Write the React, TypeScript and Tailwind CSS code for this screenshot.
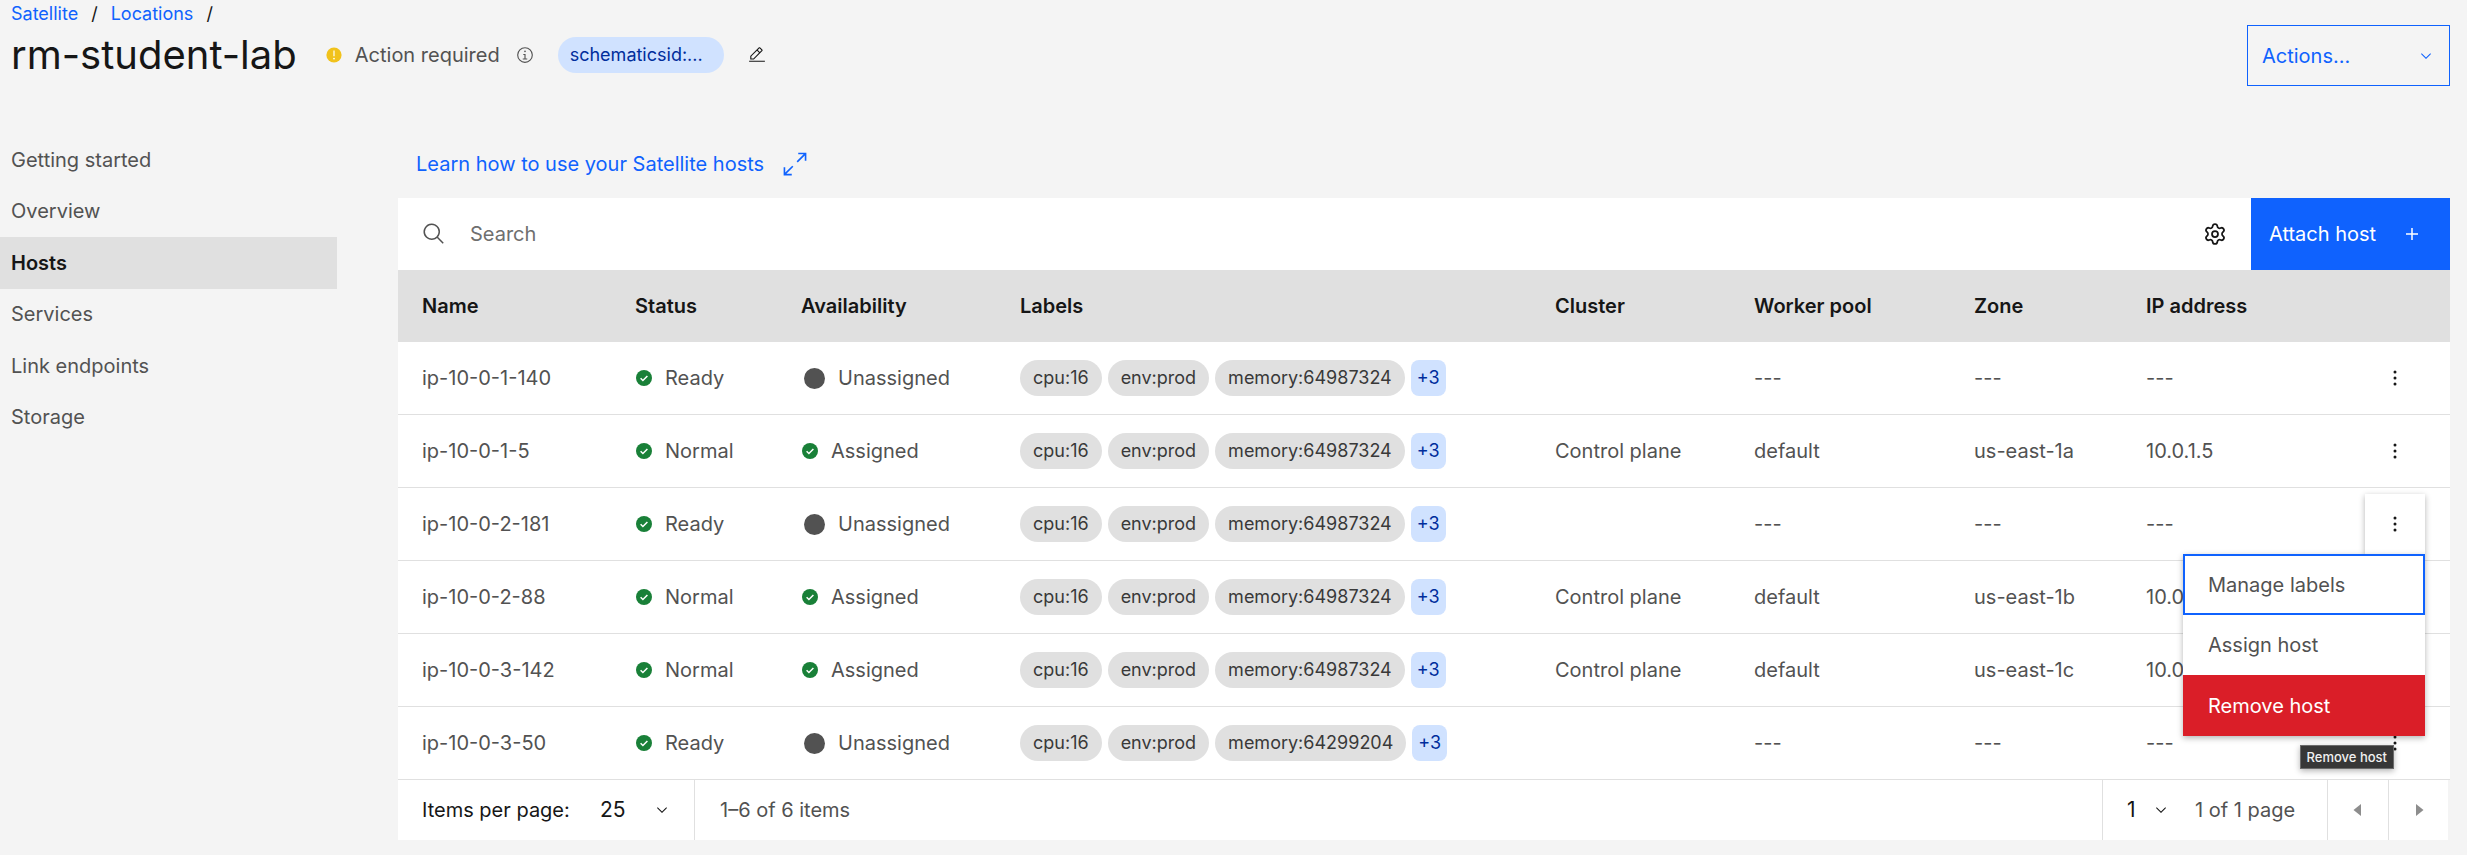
import type { ReactNode } from "react";
import { Settings } from "lucide-react";

type Host = {
  name: string;
  status: "Ready" | "Normal";
  memory: string;
  cluster?: string;
  pool?: string;
  zone?: string;
  ip?: string;
  open?: boolean;
};

const hosts: Host[] = [
  { name: "ip-10-0-1-140", status: "Ready", memory: "64987324" },
  { name: "ip-10-0-1-5", status: "Normal", memory: "64987324", cluster: "Control plane", pool: "default", zone: "us-east-1a", ip: "10.0.1.5" },
  { name: "ip-10-0-2-181", status: "Ready", memory: "64987324", open: true },
  { name: "ip-10-0-2-88", status: "Normal", memory: "64987324", cluster: "Control plane", pool: "default", zone: "us-east-1b", ip: "10.0.2.88" },
  { name: "ip-10-0-3-142", status: "Normal", memory: "64987324", cluster: "Control plane", pool: "default", zone: "us-east-1c", ip: "10.0.3.142" },
  { name: "ip-10-0-3-50", status: "Ready", memory: "64299204" },
];

const navItems = ["Getting started", "Overview", "Hosts", "Services", "Link endpoints", "Storage"];

function Icon({ size = 32, className, children }: { size?: number; className: string; children: ReactNode }) {
  return (
    <svg viewBox={`0 0 ${size} ${size}`} fill="currentColor" aria-hidden="true" className={`shrink-0 ${className}`}>
      {children}
    </svg>
  );
}

function Chevron({ className }: { className: string }) {
  return (
    <Icon size={16} className={className}>
      <path d="M8 11L3 6 3.7 5.3 8 9.6 12.3 5.3 13 6z" />
    </Icon>
  );
}

function Check() {
  return (
    <Icon size={16} className="size-4 text-[#198038]">
      <circle cx="8" cy="8" r="8" />
      <path d="M4.6 8.3L6.9 10.5 11.4 5.9" fill="none" stroke="#fff" strokeWidth="1.5" />
    </Icon>
  );
}

function Tag({ children }: { children: ReactNode }) {
  return (
    <span className="flex h-9 items-center rounded-full bg-[#e0e0e0] px-[13px] text-[18px] text-[#393939]">{children}</span>
  );
}

function RowMenu() {
  return (
    <div role="menu" className="absolute top-full right-0 z-10 flex w-[242px] flex-col bg-white shadow-[0_2px_6px_rgba(0,0,0,0.3)]">
      <button role="menuitem" className="h-[61px] border-2 border-[#0f62fe] pl-[23px] text-left">Manage labels</button>
      <button role="menuitem" className="h-[60px] pl-[25px] text-left">Assign host</button>
      <button role="menuitem" className="h-[61px] bg-[#da1e28] pl-[25px] text-left text-white">Remove host</button>
      <span
        role="tooltip"
        className="absolute top-full right-[31px] mt-[9px] flex h-6 items-center border border-[#6b6b6b] bg-[#373737] px-1.5 text-[13px] font-medium whitespace-nowrap text-[#f0f0f0] shadow-[0_2px_6px_rgba(0,0,0,0.3)]"
      >
        Remove host
      </span>
    </div>
  );
}

function HostRow({ host }: { host: Host }) {
  const assigned = host.status === "Normal";
  return (
    <tr className="*:h-[73px] *:border-b *:border-[#e0e0e0] *:p-0">
      <td className="pl-6!">{host.name}</td>
      <td className="pl-6!">
        <div className="flex items-center gap-[13px] pl-px">
          <Check />
          {host.status}
        </div>
      </td>
      <td className="pl-6!">
        <div className="flex items-center gap-[13px] pl-px">
          {assigned ? <Check /> : <span className="ml-0.5 size-[21px] rounded-full bg-[#525252]" />}
          {assigned ? "Assigned" : "Unassigned"}
        </div>
      </td>
      <td className="pl-6!">
        <div className="flex items-center gap-1.5">
          <Tag>cpu:16</Tag>
          <Tag>env:prod</Tag>
          <Tag>memory:{host.memory}</Tag>
          <button className="h-9 rounded-lg bg-[#d0e2ff] px-1.5 text-[18px] text-[#002d9c]">+3</button>
        </div>
      </td>
      <td className="pl-6!">{host.cluster}</td>
      <td className="pl-6!">{host.pool ?? "---"}</td>
      <td className="pl-6!">{host.zone ?? "---"}</td>
      <td className="pl-6!">{host.ip ?? "---"}</td>
      <td className="pr-[25px]!">
        <div className="relative ml-auto size-[60px]">
          <button
            aria-label={`Options for ${host.name}`}
            className={`flex size-full items-center justify-center text-[#161616] ${host.open ? "bg-white shadow-[0_2px_6px_rgba(0,0,0,0.3)]" : ""}`}
          >
            <Icon className="size-6">
              <circle cx="16" cy="8" r="2" />
              <circle cx="16" cy="16" r="2" />
              <circle cx="16" cy="24" r="2" />
            </Icon>
          </button>
          {host.open && <RowMenu />}
        </div>
      </td>
    </tr>
  );
}

function Pagination() {
  return (
    <footer className="mr-0.5 flex h-[60px] items-stretch bg-white">
      <div className="flex items-center pl-6">
        <label htmlFor="page-size" className="w-[156px] whitespace-nowrap text-[#161616]">Items per page:</label>
        <div className="relative flex h-full items-center border-r border-[#e0e0e0]">
          <select id="page-size" defaultValue="25" className="h-full w-[116px] appearance-none pl-[22px] text-[21px] text-[#161616]">
            <option>25</option>
          </select>
          <Chevron className="pointer-events-none absolute right-6 size-4 text-[#161616]" />
        </div>
      </div>
      <p className="flex items-center pl-[25px]">1–6 of 6 items</p>
      <div className="ml-auto flex items-stretch border-l border-[#e0e0e0]">
        <div className="relative flex items-center">
          <select aria-label="Page number" defaultValue="1" className="h-full w-[92px] appearance-none pl-6 text-[21px] text-[#161616]">
            <option>1</option>
          </select>
          <Chevron className="pointer-events-none absolute right-[26px] size-4 text-[#161616]" />
        </div>
        <span className="flex w-[132px] items-center">1 of 1 page</span>
        <button aria-label="Previous page" className="flex w-[61px] items-center justify-center border-l border-[#e0e0e0] text-[#8d8d8d]">
          <Icon className="size-6">
            <path d="M20 24L10 16 20 8z" />
          </Icon>
        </button>
        <button aria-label="Next page" className="flex w-[60px] items-center justify-center border-l border-[#e0e0e0] text-[#8d8d8d]">
          <Icon className="size-6">
            <path d="M12 8L22 16 12 24z" />
          </Icon>
        </button>
      </div>
    </footer>
  );
}

export default function App() {
  return (
    <div className="min-h-screen bg-[#f4f4f4] pb-[15px] font-['Inter',sans-serif] text-[20px] leading-6 text-[#525252]">
      <header className="flex h-[134px] items-start justify-between pr-[17px] pl-[11px]">
        <div>
          <nav aria-label="Breadcrumb" className="flex h-[27px] items-center gap-[13px] text-[18px] text-[#161616]">
            <a href="#satellite" className="text-[#0f62fe]">Satellite</a>
            <span>/</span>
            <a href="#locations" className="text-[#0f62fe]">Locations</a>
            <span>/</span>
          </nav>
          <div className="flex h-14 items-center">
            <h1 className="text-[40px] leading-[48px] text-[#161616]">rm-student-lab</h1>
            <Icon size={16} className="ml-[29px] size-4 text-[#f1c21b]">
              <circle cx="8" cy="8" r="7.6" />
              <path d="M7.4 3.6h1.2v5.6H7.4z" fill="#fff" />
              <circle cx="8" cy="11.6" r="0.9" fill="#fff" />
            </Icon>
            <span className="ml-[13px]">Action required</span>
            <button aria-label="Status details" className="ml-4">
              <Icon className="size-[18px]">
                <path d="M17 22L17 14 13 14 13 16 15 16 15 22 12 22 12 24 20 24 20 22 17 22z M16 8a1.5 1.5 0 1 0 1.5 1.5A1.5 1.5 0 0 0 16 8z" />
                <path d="M16,30A14,14,0,1,1,30,16,14,14,0,0,1,16,30ZM16,4A12,12,0,1,0,28,16,12,12,0,0,0,16,4Z" />
              </Icon>
            </button>
            <span className="ml-6 flex h-9 w-[166px] items-center rounded-full bg-[#d0e2ff] pl-3 text-[18px] text-[#002d9c]">schematicsid:...</span>
            <button aria-label="Edit tags" className="ml-6 text-[#161616]">
              <Icon className="size-[18px]">
                <path d="M2 26H30V28H2z M25.4,9c0.8-0.8,0.8-2,0-2.8l-3.6-3.6c-0.8-0.8-2-0.8-2.8,0l-15,15V24h6.4L25.4,9z M20.4,4L24,7.6l-3,3L17.4,7L20.4,4z M6,22v-3.6l10-10l3.6,3.6l-10,10H6z" />
              </Icon>
            </button>
          </div>
        </div>
        <button className="mt-[25px] flex h-[61px] w-[203px] items-center justify-between border border-[#0f62fe] pr-[15px] pl-3.5 text-[#0f62fe]">
          Actions...
          <Chevron className="size-4" />
        </button>
      </header>

      <div className="flex items-start gap-[61px] pr-[17px]">
        <nav aria-label="Location" className="grid h-[309px] w-[337px] shrink-0 grid-rows-6">
          {navItems.map((item) => (
            <a
              key={item}
              href={`#${item}`}
              className={`flex items-center pl-[11px] ${item === "Hosts" ? "bg-[#e0e0e0] font-semibold text-[#161616]" : ""}`}
            >
              {item}
            </a>
          ))}
        </nav>

        <main className="min-w-0 grow">
          <div className="flex h-16 items-center pb-1 pl-[18px]">
            <a href="#learn" className="flex items-center gap-[18px] text-[#0f62fe]">
              Learn how to use your Satellite hosts
              <Icon className="size-[26px]">
                <path d="M20 2 20 4 26.586 4 18 12.582 19.414 14 28 5.414 28 12 30 12 30 2 20 2z" />
                <path d="M14 19.416 12.592 18 4 26.586 4 20 2 20 2 30 12 30 12 28 5.414 28 14 19.416z" />
              </Icon>
            </a>
          </div>

          <div className="flex h-[72px] items-stretch bg-white">
            <label htmlFor="host-search" aria-label="Search" className="flex items-center pr-6 pl-6">
              <Icon className="size-6">
                <path d="M29,27.5859l-7.5521-7.5521a11.0177,11.0177,0,1,0-1.4141,1.4141L27.5859,29ZM4,13a9,9,0,1,1,9,9A9.01,9.01,0,0,1,4,13Z" />
              </Icon>
            </label>
            <input id="host-search" type="search" placeholder="Search" className="grow placeholder:text-[#6f6f6f]" />
            <button aria-label="Settings" className="flex w-[72px] items-center justify-center text-[#161616]">
              <Settings className="size-6" strokeWidth={1.75} aria-hidden="true" />
            </button>
            <button className="flex w-[199px] items-center justify-between bg-[#0f62fe] pr-[26px] pl-[18px] text-white">
              Attach host
              <Icon className="size-6">
                <path d="M17 15L17 8 15 8 15 15 8 15 8 17 15 17 15 24 17 24 17 17 24 17 24 15z" />
              </Icon>
            </button>
          </div>

          <table className="w-full table-fixed border-separate border-spacing-0 bg-white text-left whitespace-nowrap">
            <thead>
              <tr className="bg-[#e0e0e0] text-[#161616] *:h-[72px] *:py-0 *:pl-6 *:font-semibold">
                <th className="w-[213px]">Name</th>
                <th className="w-[166px]">Status</th>
                <th className="w-[219px]">Availability</th>
                <th className="w-[535px]">Labels</th>
                <th className="w-[199px]">Cluster</th>
                <th className="w-[220px]">Worker pool</th>
                <th className="w-[172px]">Zone</th>
                <th className="w-[218px]">IP address</th>
                <th className="w-[110px]" aria-label="Options" />
              </tr>
            </thead>
            <tbody>
              {hosts.map((host) => (
                <HostRow key={host.name} host={host} />
              ))}
            </tbody>
          </table>

          <Pagination />
        </main>
      </div>
    </div>
  );
}
